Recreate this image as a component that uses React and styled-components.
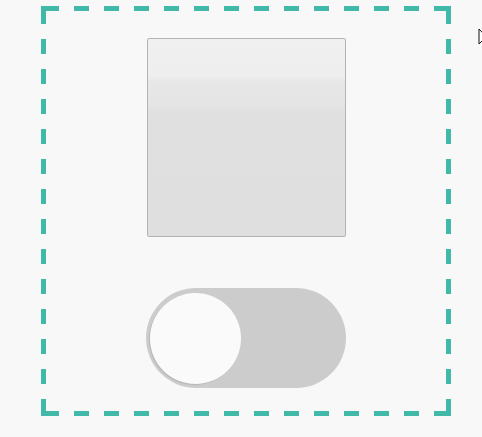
import React from 'react';
import styled, { createGlobalStyle } from 'styled-components';

const TEAL = '#40b9a9';

const GlobalStyle = createGlobalStyle`
    html, body {
        margin: 0;
        padding: 0;
        background: #f8f8f8;
        font-family: "Liberation Sans", Arial, sans-serif;
    }
`;

const Page = styled.div`
    position: relative;
    width: 482px;
    height: 437px;
    overflow: hidden;
    padding: 6px 0 0 41px;
    box-sizing: border-box;
`;

// dashed frame drawn with background tiles so the dashes are 15px on / 15px off
const Frame = styled.div`
    width: 410px;
    height: 410px;
    box-sizing: border-box;
    padding: 32px 5px 5px;
    display: flex;
    flex-direction: column;
    align-items: center;
    gap: 51px;
    background:
        linear-gradient(${TEAL}, ${TEAL}) 0 0 / 5px 5px no-repeat,
        linear-gradient(${TEAL}, ${TEAL}) 100% 0 / 5px 5px no-repeat,
        linear-gradient(${TEAL}, ${TEAL}) 0 100% / 5px 5px no-repeat,
        linear-gradient(${TEAL}, ${TEAL}) 100% 100% / 5px 5px no-repeat,
        linear-gradient(to right, ${TEAL} 15px, transparent 15px) 3px 0 / 30px 5px repeat-x,
        linear-gradient(to right, ${TEAL} 15px, transparent 15px) 3px 100% / 30px 5px repeat-x,
        linear-gradient(to bottom, ${TEAL} 15px, transparent 15px) 0 3px / 5px 30px repeat-y,
        linear-gradient(to bottom, ${TEAL} 15px, transparent 15px) 100% 3px / 5px 30px repeat-y;
`;

const GlossBox = styled.div`
    width: 199px;
    height: 199px;
    box-sizing: border-box;
    border: 1px solid #b4b4b4;
    border-radius: 2px;
    background: linear-gradient(
        #f0f0f0 0%,
        #eeeeee 19%,
        #e7e7e7 22%,
        #e5e5e5 33%,
        #e0e0e0 38%,
        #dfdfdf 100%
    );
`;

const Track = styled.div`
    width: 200px;
    height: 100px;
    border-radius: 50px;
    background: #cccccc;
    display: flex;
    align-items: center;
    padding-left: ${props => (props.on ? '105px' : '4px')};
    box-sizing: border-box;
`;

const Knob = styled.div`
    width: 91px;
    height: 91px;
    border-radius: 50%;
    background: #fafafa;
    box-shadow: -1px 1px 1px rgba(0, 0, 0, 0.1);
`;

const Cursor = styled.svg`
    position: absolute;
    left: 478px;
    top: 28px;
`;

const App = () => {
    return (
        <Page>
            <GlobalStyle />
            <Frame>
                <GlossBox />
                <Track>
                    <Knob />
                </Track>
            </Frame>
            <Cursor width="12" height="19" viewBox="0 0 12 19">
                <path d="M1 1 L1 16 L4.5 12.5 L7 18 L9 17 L6.5 11.5 L11 11.5 Z" fill="#fff" stroke="#111" strokeWidth="1" />
            </Cursor>
        </Page>
    );
};

export default App;
